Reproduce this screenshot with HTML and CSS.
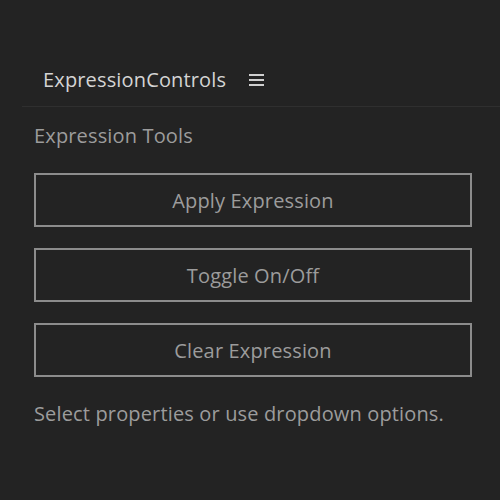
FILE: index.html
```html
<!DOCTYPE html>
<html>
<head>
<meta charset="utf-8">
<link rel="stylesheet" href="styles.css">
</head>
<body>
<div class="panel">
  <div class="header">
    <span class="title">ExpressionControls</span>
    <svg class="menu" width="15" height="14" viewBox="0 0 15 14"><rect x="0" y="1" width="15" height="2" fill="#cfcfcf"/><rect x="0" y="6" width="15" height="2" fill="#cfcfcf"/><rect x="0" y="11" width="15" height="2" fill="#cfcfcf"/></svg>
  </div>
  <div class="content">
    <div class="section-title">Expression Tools</div>
    <div class="buttons">
      <button class="btn">Apply Expression</button>
      <button class="btn">Toggle On/Off</button>
      <button class="btn">Clear Expression</button>
    </div>
    <div class="hint">Select properties or use dropdown options.</div>
  </div>
</div>
</body>
</html>
```
FILE: styles.css
```css
html, body {
  margin: 0;
  padding: 0;
  background: #232323;
  width: 500px;
  height: 500px;
  overflow: hidden;
  font-family: "Open Sans", "Noto Sans", sans-serif;
}
.panel {
  padding-top: 56px;
  padding-left: 22px;
}
.header {
  box-sizing: border-box;
  height: 51px;
  display: flex;
  align-items: center;
  padding-left: 21px;
  padding-bottom: 4px;
  border-bottom: 1px solid #2f2f2f;
}
.title {
  color: #d4d4d4;
  font-size: 20px;
  letter-spacing: 0.15px;
}
.menu {
  margin-left: 23px;
  margin-top: 1px;
}
.content {
  padding: 0 28px 0 12px;
}
.section-title {
  color: #9c9c9c;
  font-size: 20px;
  letter-spacing: 0.15px;
  margin-top: 16px;
  line-height: 26px;
}
.buttons {
  display: flex;
  flex-direction: column;
  gap: 21px;
  margin-top: 24px;
}
.btn {
  height: 54px;
  background: transparent;
  border: 2px solid #8c8c8c;
  color: #9c9c9c;
  font-family: inherit;
  font-size: 20px;
  letter-spacing: 0.15px;
  padding: 0;
}
.hint {
  color: #9c9c9c;
  font-size: 20px;
  letter-spacing: 0.15px;
  margin-top: 24px;
  line-height: 26px;
}
```
